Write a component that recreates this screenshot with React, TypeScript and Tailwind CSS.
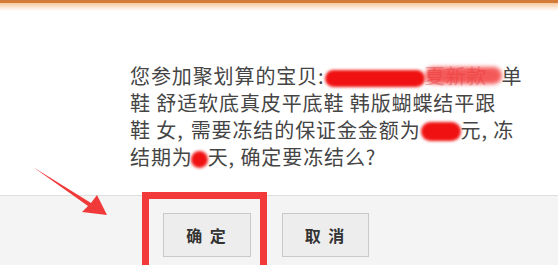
import React from "react";

const font = { fontFamily: '"Noto Sans CJK SC", "Noto Sans", sans-serif' };

function Blob({ className }: { className: string }) {
  return <span className={"inline-block align-[-3px] rounded-full bg-[#f01212] blur-[1.5px] " + className} />;
}

export default function App() {
  return (
    <div
      className="relative w-[558px] h-[265px] overflow-hidden bg-white text-[#454545]"
      style={font}
    >
      <div className="h-[3px] bg-[#d47b37]" />
      <div className="h-[8px] bg-gradient-to-b from-[#f5c99f] to-white" />
      <div className="h-[184px] pt-[51px] pl-[130px] text-[20px] leading-[27px] tracking-[0.9px]">
        <div className="whitespace-nowrap">
          您参加聚划算的宝贝:
          <Blob className="w-[100px] h-[17px]" />
          <span className="relative inline-block w-[77px] text-[#e5b0b0]">
            夏新款
            <span className="absolute left-0 right-0 top-[5px] h-[17px] rounded-full bg-[#f23030] opacity-80 blur-[2px]" />
          </span>
          单
        </div>
        <div className="whitespace-nowrap">鞋 舒适软底真皮平底鞋 韩版蝴蝶结平跟</div>
        <div className="whitespace-nowrap">
          鞋 女,<span className="ml-[7px]">需要冻结的保证金金额为</span>
          <Blob className="w-[40px] h-[19px]" />
          元, 冻
        </div>
        <div className="whitespace-nowrap">
          结期为
          <Blob className="w-[17px] h-[17px] -ml-[2px]" />
          天, 确定要冻结么?
        </div>
      </div>
      <div className="h-[70px] border-t border-[#dedede] bg-[#f4f4f4] flex gap-[31px] pl-[163px] pt-[17px]">
        <button className="w-[88px] h-[44px] bg-[#ededed] border border-[#c9c9c9] text-[16px] font-bold tracking-[2px] text-[#333]">
          确 定
        </button>
        <button className="w-[87px] h-[44px] bg-[#ededed] border border-[#c9c9c9] text-[16px] font-bold tracking-[2px] text-[#333]">
          取 消
        </button>
      </div>

      {/* annotation: highlight box */}
      <div className="absolute left-[142px] top-[192px] w-[125px] h-[90px] border-[7px] border-[#f23a3a]" />

      {/* annotation: arrow */}
      <svg className="absolute left-0 top-0" width="558" height="265" viewBox="0 0 558 265">
        <polygon
          points="33,167 91,203 97,195 107,215 82,212 88,206"
          fill="#f03a3a"
        />
      </svg>
    </div>
  );
}
